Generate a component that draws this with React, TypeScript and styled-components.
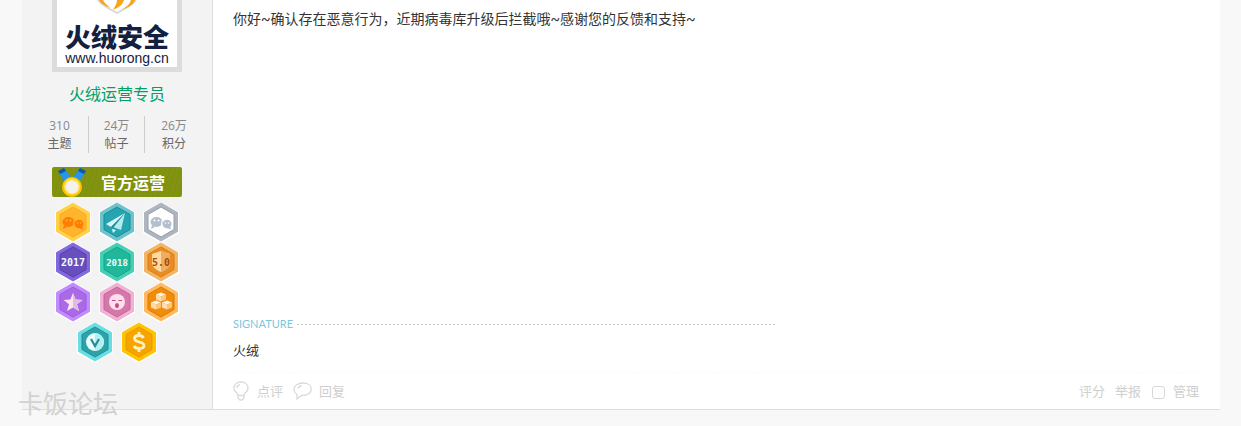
import React from "react";
import styled, { createGlobalStyle } from "styled-components";

const cjk = `"Noto Sans CJK SC", sans-serif`;

const GlobalStyle = createGlobalStyle`
  body { margin: 0; background: #f8f8f8; color: #333; font: 12px/18px "Open Sans", ${cjk}; }
  * { box-sizing: border-box; }
`;
const Page = styled.div`
  position: relative;
  padding: 0 21px 16px 22px;
  overflow: hidden;
`;
const Post = styled.article`
  display: flex;
  background: #fff;
  border-bottom: 1px solid #dedede;
`;
const Author = styled.aside`
  flex: 0 0 191px;
  display: flex;
  flex-direction: column;
  align-items: center;
  padding-bottom: 47px;
  background: #f3f3f3;
  border-right: 1px solid #dedede;
`;
const Avatar = styled.a`
  display: flex;
  flex-direction: column;
  align-items: center;
  width: 130px;
  height: 72px;
  border: 5px solid #dcdcdc;
  border-top: 0;
  background: #fff;
  color: #14203f;
  text-decoration: none;
`;
const Shield = styled.svg`
  display: block;
  flex: none;
`;
const Brand = styled.span`
  font: 900 26px/26px ${cjk};
  margin-top: 8px;
`;
const Site = styled.span`
  font: 14px/18px "Liberation Sans", sans-serif;
`;
const UserName = styled.a`
  margin-top: 10px;
  font-size: 16px;
  line-height: 24px;
  color: #00a067;
  text-decoration: none;
`;
const Stats = styled.div`
  display: grid;
  grid-template-columns: 57px 56px 59px;
  margin-top: 10px;
`;
const Stat = styled.a`
  display: flex;
  flex-direction: column;
  align-items: center;
  padding-top: 1px;
  color: #666;
  text-decoration: none;
  & + & { border-left: 1px solid #cdcdcd; }
`;
const Count = styled.span`
  color: #888;
`;
const Rank = styled.div`
  display: flex;
  align-items: center;
  width: 130px;
  height: 30px;
  margin-top: 14px;
  padding-left: 4px;
  gap: 13px;
  border-radius: 2px;
  background: repeating-linear-gradient(105deg, #82940f 0 4px, #7d8f0e 4px 5px);
  color: #fff;
  font: 700 16px/28px ${cjk};
`;
const Medals = styled.div`
  display: flex;
  flex-wrap: wrap;
  justify-content: center;
  width: 132px;
  margin-top: 5px;
`;
const Medal = styled.svg`
  display: block;
  width: 44px;
  height: 40px;
`;
const Content = styled.div`
  flex: 1;
  min-width: 0;
  display: flex;
  flex-direction: column;
  padding: 8px 21px 0 20px;
`;
const Message = styled.p`
  flex: 1;
  margin: 0;
  font: 14px/22px Roboto, ${cjk};
`;
const Signature = styled.section`
  width: 544px;
  max-width: 100%;
  font-size: 13px;
  line-height: 20px;
`;
const SignatureHead = styled.div`
  display: flex;
  align-items: center;
  gap: 4px;
  margin-bottom: 11px;
  font: 11px/10px Lato, sans-serif;
  color: #7cc6dd;
  &::after {
    content: "";
    flex: 1;
    height: 1px;
    background: repeating-linear-gradient(90deg, #c4c4c4 0 2px, transparent 2px 4px);
  }
`;
const Actions = styled.footer`
  display: flex;
  align-items: center;
  height: 37px;
  margin-top: 12px;
  border-top: 1px dashed #fafafa;
  font-size: 13px;
  color: #cfcfcf;
`;
const Action = styled.a`
  display: flex;
  align-items: center;
  gap: 7px;
  margin-right: 10px;
  color: inherit;
  text-decoration: none;
`;
const Manage = styled.label`
  display: flex;
  align-items: center;
  gap: 8px;
`;
const Check = styled.input`
  appearance: none;
  width: 13px;
  height: 13px;
  margin: 2px 0 0 1px;
  border: 1px solid #d8d8d8;
  border-radius: 3px;
  background: #fff;
`;
const Spacer = styled.span`
  flex: 1;
`;
const Watermark = styled.div`
  position: absolute;
  left: 18px;
  bottom: 9px;
  font: 400 25px/30px ${cjk};
  color: #d2d2d2;
`;

type MedalKind = { rim: string; fill: string; edge: string; name: string; art: React.ReactNode };

const chat = (color: string, eye: string) => (
  <g>
    <g fill={color}>
      <ellipse cx="17.500" cy="20" rx="6" ry="5" />
      <path d="m13 23-1 4 4-2z" />
      <ellipse cx="28" cy="22" rx="4.500" ry="4.200" />
      <path d="m31 24 1 3.500-4-1.500z" />
    </g>
    <g fill={eye}>
      <circle cx="15.500" cy="18.500" r="1" /><circle cx="19.500" cy="18.500" r="1" />
      <circle cx="26.500" cy="21" r=".8" /><circle cx="29.500" cy="21" r=".8" />
    </g>
    <path d="M23.500 17.500c-1.500 2-1.500 5 0 7.500" fill="none" stroke={eye} strokeWidth=".8" />
  </g>
);
const year = (text: string, size: number) => (
  <text x="22" y="24" textAnchor="middle" fill="#effcf9" fontSize={size} fontWeight="700" fontFamily="DejaVu Sans Mono, monospace">{text}</text>
);
const cube = (x: number, y: number) => (
  <g transform={`translate(${x} ${y})`}>
    <path d="M0-4.500 5-2.500 0-.5-5-2.500z" fill="#fff3df" /><path d="M-5-2.500 0-.5V4.500L-5 2.500z" fill="#ffdfb2" /><path d="M5-2.500 0-.5V4.500L5 2.500z" fill="#ffc57c" />
  </g>
);

const medals: MedalKind[] = [
  { name: "微信", rim: "#ffd04a", fill: "#ffb52d", edge: "#ffa91c", art: chat("#ff7d00", "#ffb52d") },
  { name: "飞机", rim: "#6ec3ca", fill: "#25a5b1", edge: "#168e9b", art: <><path d="M30 11 11 22l5 3z" fill="#d8f6f7" /><path d="M30 11 18 25l8 3z" fill="#b6ebee" /><path d="M30 11 16 25l2 1z" fill="#168e9b" /><path d="m17 27 4 1-3 3z" fill="#e8fbfb" /></> },
  { name: "聊天", rim: "#adb5bf", fill: "#fff", edge: "#949eaa", art: chat("#b3bfcd", "#fff") },
  { name: "2017", rim: "#8169dd", fill: "#694fbd", edge: "#563da7", art: year("2017", 10) },
  { name: "2018", rim: "#46cfb4", fill: "#20b79b", edge: "#13a78c", art: year("2018", 9) },
  { name: "5.0", rim: "#f2b466", fill: "#e78d21", edge: "#dc7d12", art: <><path d="m22 9 9 3v9c0 4-4 7-9 9-5-2-9-5-9-9v-9z" fill="#ffd99f" /><path d="m22 9 9 3v9c0 4-4 7-9 9z" fill="#ecae66" /><text x="22" y="24" textAnchor="middle" fill="#a94a00" fontSize="10" fontWeight="700" fontFamily="DejaVu Sans Mono, monospace" >5.0</text></> },
  { name: "星星", rim: "#c18aff", fill: "#aa69e7", edge: "#9c5bd8", art: <><path d="m22 11 2.600 6.500 6.900.500-5.500 4.200 2 6.800-6-3.500-6 3.500 2-6.800-5.500-4.200 6.900-.500z" fill="#ffe6ee" /><path d="m22 11 2.600 6.500 6.900.500-5.500 4.200 2 6.800-6-3.500z" fill="#dfbde5" /></> },
  { name: "表情", rim: "#f0b1d2", fill: "#d477a9", edge: "#c9649b", art: <><circle cx="22" cy="20" r="8" fill="#ffddec" /><path d="M17 18.500h3.500M23.500 18.500H27" stroke="#b95186" /><ellipse cx="22" cy="23.500" rx="2" ry="2.500" fill="#b95186" /></> },
  { name: "积木", rim: "#ffb962", fill: "#ef8c09", edge: "#df7700", art: <>{cube(22, 15)}{cube(17, 23)}{cube(28, 23)}</> },
  { name: "认证", rim: "#6adde2", fill: "#2da3a9", edge: "#1f8e95", art: <><circle cx="22" cy="20" r="9" fill="#e8ffff" /><path d="M22 11a9 9 0 0 1 0 18z" fill="#b3eef1" /><path d="m18 17 4 7 4-7" fill="none" stroke="#218e98" strokeWidth="2.200" /></> },
  { name: "金币", rim: "#ffc400", fill: "#f5a400", edge: "#ed9500", art: <><path d="M26.500 16c-1-2-2.500-2.500-4.500-2.500-3 0-4.500 1.200-4.500 3 0 4.500 9.500 2.500 9.500 7 0 2-2 3-5 3-2 0-4-.500-5-2.500M22 10v4M22 26v4" fill="none" stroke="#fff0bd" strokeWidth="2.800" /></> },
];

export default function App() {
  return (
    <>
      <GlobalStyle />
      <Page>
        <Post>
          <Author>
            <Avatar href="#">
              <Shield width="50" height="15" viewBox="0 0 50 15">
                <path d="M6 0c4 6 10 8 19 13 9-5 15-7 19-13" fill="none" stroke="#d4d6da" strokeWidth="1.500" />
                <path d="M7 0h4c1 3 4 5 8 8C13 6 9 4 7 0zM25 0h7c-1 4-4 7-11 10 2-4 4-6 4-10zM43 0h-4c-1 4-4 7-9 9 6-1 11-4 13-9z" fill="#f9a41b" />
              </Shield>
              <Brand>火绒安全</Brand>
              <Site>www.huorong.cn</Site>
            </Avatar>
            <UserName href="#">火绒运营专员</UserName>
            <Stats>
              <Stat href="#"><Count>310</Count>主题</Stat>
              <Stat href="#"><Count>24万</Count>帖子</Stat>
              <Stat href="#"><Count>26万</Count>积分</Stat>
            </Stats>
            <Rank>
              <svg width="32" height="30" viewBox="0 0 32 30">
                <path d="m2 4 6-3 8 11-6 5zM30 4l-6-3-8 11 6 5z" fill="#2196f3" />
                <path d="m2 4 6-3 2 3-6 3zM30 4l-6-3-2 3 6 3z" fill="#12569e" />
                <circle cx="16" cy="20" r="10" fill="#ffc400" /><circle cx="16" cy="19.500" r="8" fill="#ffe45c" /><circle cx="16" cy="20" r="6.500" fill="#f4f2ea" />
              </svg>
              官方运营
            </Rank>
            <Medals>
              {medals.map((m) => (
                <Medal key={m.name} viewBox="0 0 44 40" role="img" aria-label={m.name}>
                  <path d="m22 1 17 9.500v20L22 40 5 30.500v-20z" fill="#fff" stroke="#fff" strokeWidth="2" strokeLinejoin="round" />
                  <path d="m22 1 16.500 9.500v19L22 39 5.500 29.500v-19z" fill={m.rim} stroke={m.rim} strokeLinejoin="round" />
                  <path d="m22 5 13 7.500v15L22 35 9 27.500v-15z" fill={m.fill} stroke={m.edge} />
                  {m.art}
                </Medal>
              ))}
            </Medals>
          </Author>
          <Content>
            <Message>你好~确认存在恶意行为，近期病毒库升级后拦截哦~感谢您的反馈和支持~</Message>
            <Signature>
              <SignatureHead>SIGNATURE</SignatureHead>
              火绒
            </Signature>
            <Actions>
              <Action href="#">
                <svg width="17" height="20" viewBox="0 0 17 20" fill="none" stroke="#dadada" strokeWidth="1.300">
                  <path d="M5 14.500C5 11.500 1 11 1 7.500 1 3.500 4 1 8 1s7 2.500 7 6.500c0 3.500-4 4-4 7z" /><path d="M5 14.500V17l2 2h2l2-2v-2.500M4 7c0-2 1-3 3-3" />
                </svg>
                点评
              </Action>
              <Action href="#">
                <svg width="19" height="18" viewBox="0 0 19 18" fill="none" stroke="#dadada" strokeWidth="1.300">
                  <path d="M10 1c5 0 8.300 2.500 8.300 6S15 13.500 10 13.500H8.500L4 17v-4.500C2 11 1 9.500 1 7.500 1 3.500 5 1 10 1zM5 6.500C5.500 5 7 4 8.500 4" />
                </svg>
                回复
              </Action>
              <Spacer />
              <Action href="#">评分</Action>
              <Action href="#">举报</Action>
              <Manage><Check type="checkbox" />管理</Manage>
            </Actions>
          </Content>
        </Post>
        <Watermark>卡饭论坛</Watermark>
      </Page>
    </>
  );
}
